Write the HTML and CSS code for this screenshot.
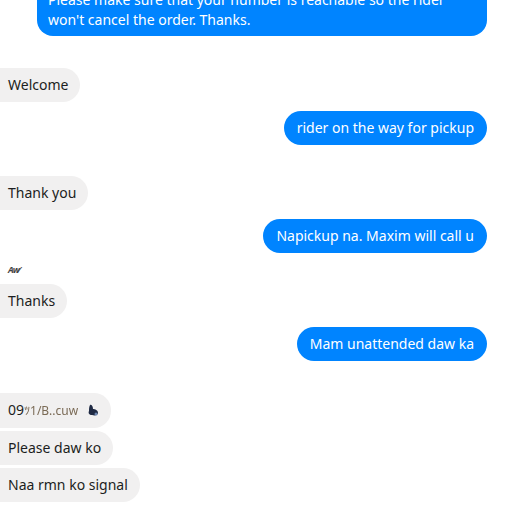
FILE: index.html
```html
<!DOCTYPE html>
<html>
<head>
<meta charset="utf-8">
<link rel="stylesheet" href="styles.css">
</head>
<body>
<div class="chat">
  <div class="row out first">
    <div class="bubble blue big">Please make sure that your number is reachable so the rider<br>won't cancel the order. Thanks.</div>
  </div>
  <div class="row in gap-l"><div class="bubble gray">Welcome</div></div>
  <div class="row out gap-s"><div class="bubble blue">rider on the way for pickup</div></div>
  <div class="row in gap-m"><div class="bubble gray">Thank you</div></div>
  <div class="row out gap-s"><div class="bubble blue">Napickup na. Maxim will call u</div></div>
  <div class="name">Aw&#x2044;</div>
  <div class="row in gap-n"><div class="bubble gray">Thanks</div></div>
  <div class="row out gap-s"><div class="bubble blue">Mam unattended daw ka</div></div>
  <div class="row in gap-l"><div class="bubble gray">09<span class="redact">ﾂ1/B..cuw</span><svg class="blob" width="12" height="12" viewBox="0 0 12 12"><path d="M3 1 C5 0 6 3 6 5 C8 5 11 6 11 9 C11 11 8 12 5 11 C2 11 1 9 2 7 C2 5 2 3 3 1 Z" fill="#1f2a44"/><circle cx="9" cy="10" r="1.5" fill="#6c86b0"/></svg></div></div>
  <div class="row in gap-t"><div class="bubble gray">Please daw ko</div></div>
  <div class="row in gap-t"><div class="bubble gray">Naa rmn ko signal</div></div>
</div>
</body>
</html>
```
FILE: styles.css
```css
html, body {
  margin: 0;
  padding: 0;
  background: #ffffff;
  overflow: hidden;
}
.chat {
  display: flex;
  flex-direction: column;
  width: 507px;
  font-family: "Noto Sans", "Open Sans", sans-serif;
  font-size: 14px;
  line-height: 20px;
}
.row {
  display: flex;
}
.row.out {
  justify-content: flex-end;
  padding-right: 20px;
}
.row.in {
  justify-content: flex-start;
}
.first {
  margin-top: -17px;
}
.gap-l { margin-top: 32px; }
.gap-m { margin-top: 31px; }
.gap-s { margin-top: 9px; }
.gap-n { margin-top: 9px; }
.gap-t { margin-top: 3px; }
.bubble {
  padding: 7px 13px;
  border-radius: 17px;
  white-space: nowrap;
}
.bubble.blue {
  background: #0084ff;
  color: #ffffff;
}
.bubble.gray {
  background: #f1f0f0;
  color: #1c1e21;
  padding-left: 8px;
  padding-right: 12px;
  border-top-left-radius: 0;
  border-bottom-left-radius: 0;
}
.bubble.big {
  width: 427px;
  padding: 7px 12px 6px 11px;
  border-radius: 0 0 16px 16px;
}
.name {
  margin-top: 12px;
  padding-left: 8px;
  height: 10px;
  font-size: 9px;
  line-height: 10px;
  font-style: italic;
  font-weight: bold;
  color: #444;
  letter-spacing: -1px;
}
.redact {
  color: #7a6a55;
  font-size: 12px;
  letter-spacing: 0;
  filter: blur(0.6px);
  margin-right: 9px;
}
.blob {
  vertical-align: -1px;
}
```
